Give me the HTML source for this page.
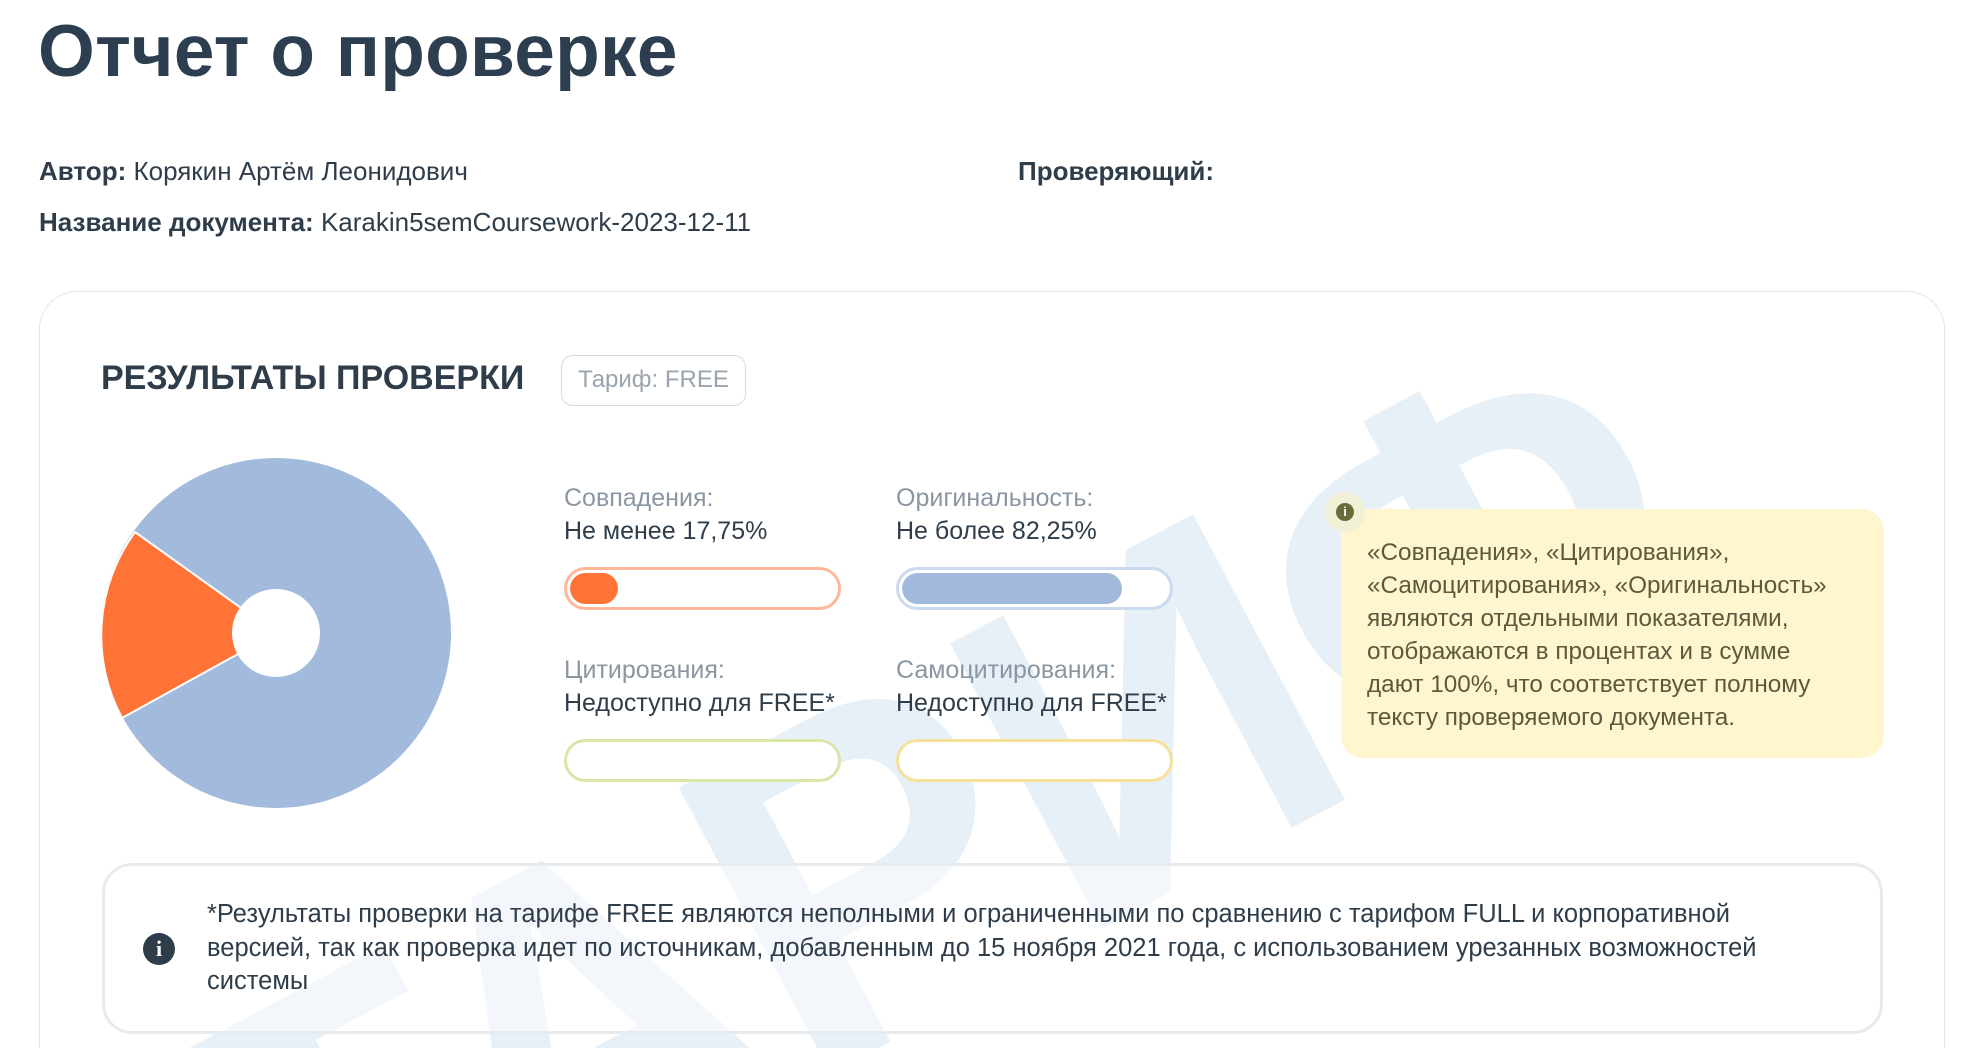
<!DOCTYPE html>
<html><head><meta charset="utf-8"><style>
*{margin:0;padding:0;box-sizing:border-box}
html,body{width:1984px;height:1048px;overflow:hidden}
body{background:#fff;font-family:"Liberation Sans","DejaVu Sans",sans-serif;color:#2f3d4a;position:relative}
.abs{position:absolute;white-space:nowrap}
h1{position:absolute;left:38px;top:10px;font-size:73px;font-weight:bold;color:#2c3e50;letter-spacing:0.3px}
.meta{font-size:26px}
.card{position:absolute;left:39px;top:291px;width:1906px;height:757px;border:1.5px solid #e3e7ea;border-bottom:none;border-radius:38px 38px 0 0;overflow:hidden;background:#fff}
.wm{position:absolute;left:60px;top:720px;font-size:470px;line-height:1;font-weight:bold;color:#e7eff7;transform:rotate(-28deg);transform-origin:0 0;letter-spacing:-6px}
.lbl{font-size:25px;color:#8a96a2}
.val{font-size:25px;color:#2f3d4a}
.bar{position:absolute;width:277px;height:43px;border-radius:22px;border:3px solid}
</style></head><body>
<h1>Отчет о проверке</h1>
<div class="abs meta" style="left:39px;top:156px"><b>Автор:</b> Корякин Артём Леонидович</div>
<div class="abs meta" style="left:1018px;top:156px"><b>Проверяющий:</b></div>
<div class="abs meta" style="left:39px;top:207px"><b>Название документа:</b> Karakin5semCoursework-2023-12-11</div>
<div class="card">
 <div class="wm">ТАРИФ</div>
</div>
<div class="abs" style="left:101px;top:359px;font-size:34px;font-weight:bold;color:#2f3d4a">РЕЗУЛЬТАТЫ ПРОВЕРКИ</div>
<div class="abs" style="left:561px;top:355px;width:185px;height:51px;border:1.5px solid #d6dbe0;border-radius:12px;font-size:24px;color:#9aa4ae;text-align:center;line-height:48px;background:#fff">Тариф: FREE</div>
<svg class="abs" style="left:0;top:0" width="1984" height="1048">
 <circle cx="276" cy="633" r="175" fill="#a2bbdd"/>
 <path d="M276 633 L135 532 A175 175 0 0 0 122 718 Z" fill="#ff7337" stroke="#fff" stroke-width="2"/>
 <circle cx="276" cy="633" r="44" fill="#fff"/>
</svg>
<div class="abs lbl" style="left:564px;top:484px">Совпадения:</div>
<div class="abs val" style="left:564px;top:517px">Не менее 17,75%</div>
<div class="bar" style="left:564px;top:567px;border-color:#ffb79a;background:#fff"><div style="position:absolute;left:3px;top:3px;width:48px;height:31px;border-radius:16px;background:#ff7337"></div></div>
<div class="abs lbl" style="left:896px;top:484px">Оригинальность:</div>
<div class="abs val" style="left:896px;top:517px">Не более 82,25%</div>
<div class="bar" style="left:896px;top:567px;border-color:#cbdaee;background:#fff"><div style="position:absolute;left:3px;top:3px;width:220px;height:31px;border-radius:16px;background:#a2bbdd"></div></div>
<div class="abs lbl" style="left:564px;top:656px">Цитирования:</div>
<div class="abs val" style="left:564px;top:689px">Недоступно для FREE*</div>
<div class="bar" style="left:564px;top:739px;border-color:#d8e6a8;background:#fff"></div>
<div class="abs lbl" style="left:896px;top:656px">Самоцитирования:</div>
<div class="abs val" style="left:896px;top:689px">Недоступно для FREE*</div>
<div class="bar" style="left:896px;top:739px;border-color:#f7e09a;background:#fff"></div>
<div class="abs" style="left:1341px;top:509px;width:543px;height:249px;border-radius:22px;background:#fff6cf"></div>
<div class="abs" style="left:1325px;top:492px;width:40px;height:40px;border-radius:50%;background:#f2f0d6"></div>
<div class="abs" style="left:1336px;top:503px;width:18px;height:18px;border-radius:50%;background:#6b6a3a;color:#fff;font-size:13px;font-weight:bold;text-align:center;line-height:18px">i</div>
<div class="abs" style="left:1367px;top:536px;font-size:24.3px;line-height:33px;color:#5c5a3c;white-space:normal;width:515px">«Совпадения», «Цитирования»,<br>«Самоцитирования», «Оригинальность»<br>являются отдельными показателями,<br>отображаются в процентах и в сумме<br>дают 100%, что соответствует полному<br>тексту проверяемого документа.</div>
<div class="abs" style="left:102px;top:863px;width:1781px;height:171px;border:3px solid #e8ebee;border-radius:30px;background:rgba(255,255,255,0.5)"></div>
<div class="abs" style="left:143px;top:933px;width:32px;height:32px;border-radius:50%;background:#2f3d4a;color:#fff;font-size:22px;font-weight:bold;text-align:center;line-height:32px;font-family:'Liberation Serif',serif">i</div>
<div class="abs" style="left:207px;top:898px;font-size:25.5px;line-height:33.5px;color:#2f3d4a;white-space:normal;width:1660px">*Результаты проверки на тарифе FREE являются неполными и ограниченными по сравнению с тарифом FULL и корпоративной<br>версией, так как проверка идет по источникам, добавленным до 15 ноября 2021 года, с использованием урезанных возможностей<br>системы</div>
</body></html>
